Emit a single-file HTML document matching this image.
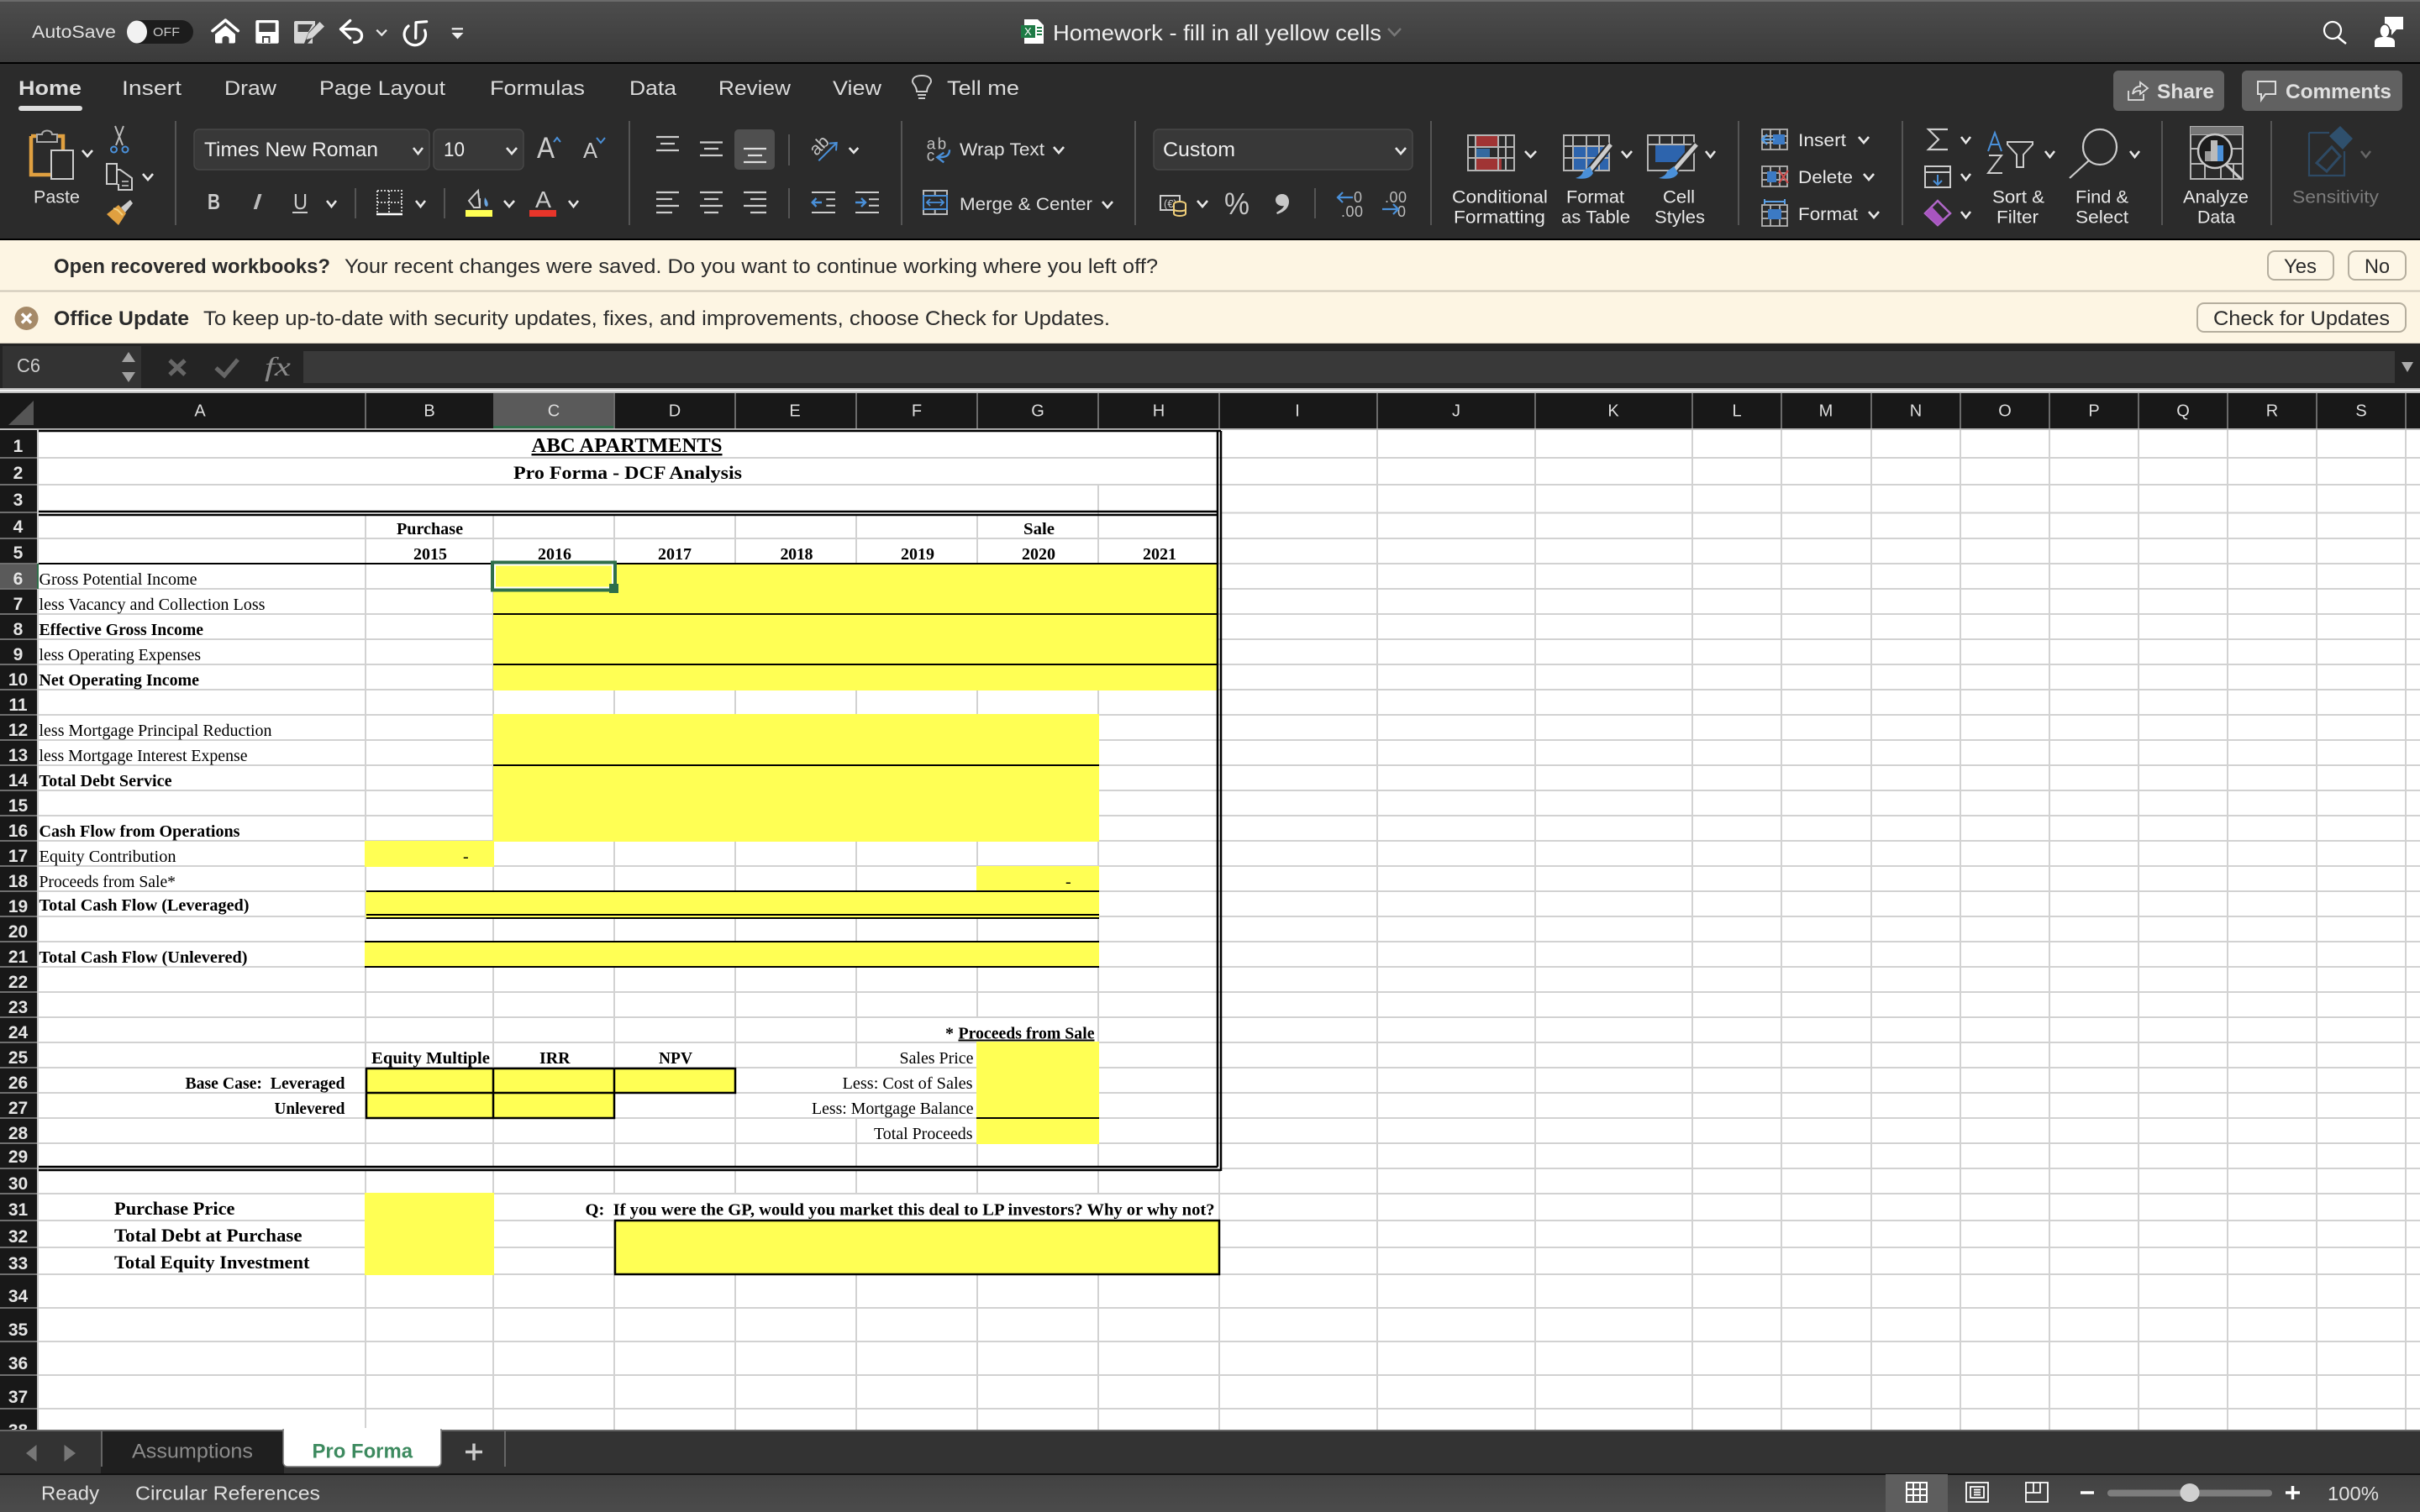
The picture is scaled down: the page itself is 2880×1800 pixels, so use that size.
<!DOCTYPE html>
<html><head><meta charset="utf-8"><title>Homework - fill in all yellow cells</title>
<style>html,body{margin:0;padding:0;background:#fff;width:2880px;height:1800px;overflow:hidden}svg{display:block}
.s{font-family:"Liberation Sans",sans-serif}.t{font-family:"Liberation Serif",serif;fill:#000;font-size:20px}.b{font-weight:bold}</style></head><body>
<svg xmlns="http://www.w3.org/2000/svg" width="2880" height="1800" viewBox="0 0 2880 1800">
<defs>
<linearGradient id="tb" x1="0" y1="0" x2="0" y2="1"><stop offset="0" stop-color="#4d4d4d"/><stop offset="1" stop-color="#3a3a3a"/></linearGradient>
<linearGradient id="st" x1="0" y1="0" x2="0" y2="1"><stop offset="0" stop-color="#424242"/><stop offset="1" stop-color="#4b4b4b"/></linearGradient>
</defs>
<!-- title bar -->
<rect width="2880" height="76" fill="url(#tb)"/><rect width="2880" height="2" fill="#6b6b6b"/><rect y="74" width="2880" height="2" fill="#000"/>
<g class="s">
<text x="38" y="45" font-size="21" fill="#e0e0e0" textLength="100" lengthAdjust="spacingAndGlyphs">AutoSave</text>
<rect x="152" y="24" width="78" height="28" rx="14" fill="#1c1c1c"/><ellipse cx="163" cy="38" rx="12" ry="13.5" fill="#f2f2f2"/>
<text x="182" y="43" font-size="15" fill="#c8c8c8" textLength="32" lengthAdjust="spacingAndGlyphs">OFF</text>
</g>
<path d="M253 36.700L268.300 24L283.300 36.700" fill="none" stroke="#fff" stroke-width="3.500" stroke-linecap="round" stroke-linejoin="round"/><path d="M256 40.700L268.300 30.500L280 40.700V49.500a2 2 0 0 1-2 2H272.500V46a4 3 0 0 0-8 0V51.500H258a2 2 0 0 1-2-2Z" fill="#fff"/>
<path d="M306.300 24H329.700a2 2 0 0 1 2 2V49.700a2 2 0 0 1-2 2H306.300a2 2 0 0 1-2-2V26a2 2 0 0 1 2-2ZM308.300 27.300V38H327.700V27.300Z" fill="#fff" fill-rule="evenodd"/><path d="M313 51V44H320.500V51" fill="none" stroke="#444" stroke-width="2"/>
<path d="M352 25H375V30L367 39L362 51.700H352a2 2 0 0 1-2-2V27a2 2 0 0 1 2-2ZM354.500 29V38H367L372 29Z" fill="#d6d6d6" fill-rule="evenodd"/><path d="M372 51.700H366L372 45Z" fill="#d6d6d6"/>
<path d="M364.500 47L367 40L380.500 26L386 31.500L372 45Z" fill="#d6d6d6"/>
<path d="M416.700 24.500L405.500 34.700L416.700 45.500M405.500 34.700H421.700C433.500 34.700 433.500 50.500 421.700 50.500" fill="none" stroke="#fff" stroke-width="3.300" stroke-linecap="round" stroke-linejoin="round"/>
<path d="M486 31A12.700 12.700 0 1 0 505.500 36M494.700 45.500L495 26.700L507.700 25.700" fill="none" stroke="#fff" stroke-width="3.200" stroke-linecap="round" stroke-linejoin="round"/>
<path d="M537.700 34.300H551" stroke="#eee" stroke-width="2.200"/><path d="M537.500 39H551.500L544.500 46.500Z" fill="#eee"/>
<path d="M1219 23H1235L1242 30V52H1219Z" fill="#fff"/><rect x="1215" y="30" width="17" height="15" fill="#1d7a45"/><path d="M1234 32h6v2h-6zM1234 36h6v2h-6zM1234 40h6v2h-6z" fill="#1d7a45"/>
<text class="s" x="1219" y="42" font-size="13" fill="#fff">X</text>
<text class="s" x="1253" y="48" font-size="26" fill="#eee" textLength="391" lengthAdjust="spacingAndGlyphs">Homework - fill in all yellow cells</text>
<path d="M1652 34L1659.500 42L1667 34" fill="none" stroke="#777" stroke-width="2.500"/>
<circle cx="2776" cy="36" r="10" fill="none" stroke="#fff" stroke-width="2.200"/><path d="M2782 44L2792 52" stroke="#fff" stroke-width="2.500"/>
<path d="M2838 20H2860V35H2852L2846 42V35H2838Z" fill="#fff"/><ellipse cx="2838" cy="37" rx="6" ry="8" fill="#fff" stroke="#3f3f3f" stroke-width="1.500"/><path d="M2826 56V50C2826 45 2832 44 2838 44S2850 45 2850 50V56Z" fill="#fff"/>
<!-- ribbon -->
<rect y="76" width="2880" height="208" fill="#2b2b2b"/><rect y="284" width="2880" height="2" fill="#000"/>
<g class="s" font-size="24" fill="#dcdcdc">
<text x="22" y="113" font-weight="bold" textLength="75" lengthAdjust="spacingAndGlyphs">Home</text>
<text x="145" y="113" textLength="71" lengthAdjust="spacingAndGlyphs">Insert</text>
<text x="267" y="113" textLength="62" lengthAdjust="spacingAndGlyphs">Draw</text>
<text x="380" y="113" textLength="150" lengthAdjust="spacingAndGlyphs">Page Layout</text>
<text x="583" y="113" textLength="113" lengthAdjust="spacingAndGlyphs">Formulas</text>
<text x="749" y="113" textLength="56" lengthAdjust="spacingAndGlyphs">Data</text>
<text x="855" y="113" textLength="86" lengthAdjust="spacingAndGlyphs">Review</text>
<text x="991" y="113" textLength="58" lengthAdjust="spacingAndGlyphs">View</text>
<text x="1127" y="113" textLength="86" lengthAdjust="spacingAndGlyphs">Tell me</text>
</g>
<rect x="22" y="126" width="76" height="6" rx="3" fill="#ddd"/>
<path d="M1091 109C1091 102 1086 100 1086 97C1086 92 1091 90 1097 90C1103 90 1108 92 1108 97C1108 100 1103 102 1103 109ZM1092 113H1102M1093 117H1101" fill="none" stroke="#ccc" stroke-width="2"/>
<rect x="2515" y="84" width="132" height="48" rx="6" fill="#616161"/><rect x="2668" y="84" width="191" height="48" rx="6" fill="#616161"/>
<g class="s" font-size="24" font-weight="bold" fill="#e0e0e0"><text x="2567" y="117" textLength="68" lengthAdjust="spacingAndGlyphs">Share</text><text x="2720" y="117" textLength="126" lengthAdjust="spacingAndGlyphs">Comments</text></g>
<path d="M2533 108V119H2551V112M2538 112C2539 105 2543 103 2547 103V98L2556 105L2547 112V108C2543 108 2540 109 2538 112Z" fill="none" stroke="#ddd" stroke-width="1.800"/>
<path d="M2687 97H2708V112H2696L2691 119V112H2687Z" fill="none" stroke="#ddd" stroke-width="2"/>
<!-- separators -->
<path d="M209 144V268M749 144V268M1073 144V268M1351 144V268M1703 144V268M2069 144V268M2264 144V268M2573 144V268M2703 144V268" stroke="#555" stroke-width="2"/>
<path d="M423 224V260M529 224V260M939 160V197M939 224V260M1565 224V260" stroke="#555" stroke-width="2"/>
<!-- paste -->
<path d="M37 162H46M66 162H75V178M37 162V208H60" fill="none" stroke="#e0a040" stroke-width="4.500"/>
<path d="M44 169V160H50C50 154 62 154 62 160H68V169Z" fill="#2b2b2b" stroke="#aaa" stroke-width="2"/>
<rect x="61" y="179" width="26" height="34" fill="#2b2b2b" stroke="#ccc" stroke-width="2"/>
<text class="s" x="40" y="241.500" font-size="21" fill="#e0e0e0" textLength="55" lengthAdjust="spacingAndGlyphs">Paste</text>
<path d="M137 150L146 173M147 150L138 173" stroke="#bbb" stroke-width="2" fill="none"/><circle cx="135.500" cy="178" r="3.500" fill="none" stroke="#4a90d9" stroke-width="2"/><circle cx="149" cy="178" r="3.500" fill="none" stroke="#4a90d9" stroke-width="2"/>
<path d="M127 195H139V219H127ZM139 202H143L157 212V226H141V219" fill="none" stroke="#ccc" stroke-width="2"/><path d="M145 216H153M145 221H153" stroke="#ccc" stroke-width="1.500"/>
<path d="M127 255L141 244L150 254L141 268Z" fill="#e0a040"/><path d="M135 248L140 250L146 256" stroke="#f2d080" stroke-width="2" fill="none"/><path d="M144 247L155 238L158 242L149 253Z" fill="#ccc"/>
<!-- font -->
<rect x="231" y="154" width="280" height="48" rx="6" fill="#383838" stroke="#474747" stroke-width="1.500"/><rect x="516" y="154" width="107" height="48" rx="6" fill="#383838" stroke="#474747" stroke-width="1.500"/>
<rect x="1373" y="154" width="308" height="48" rx="6" fill="#383838" stroke="#474747" stroke-width="1.500"/>
<g class="s" font-size="24" fill="#eee"><text x="243" y="186" textLength="207" lengthAdjust="spacingAndGlyphs">Times New Roman</text><text x="528" y="186" textLength="25" lengthAdjust="spacingAndGlyphs">10</text>
<text x="1384" y="186" textLength="86" lengthAdjust="spacingAndGlyphs">Custom</text></g>
<g class="s" fill="#ccc"><text x="639" y="188" font-size="35" textLength="21" lengthAdjust="spacingAndGlyphs">A</text><text x="694" y="188" font-size="26" textLength="17" lengthAdjust="spacingAndGlyphs">A</text></g>
<path d="M659 169L663 164L667 169M710 164L715 170L720 164" fill="none" stroke="#4a90d9" stroke-width="2"/>
<g class="s" fill="#ccc"><text x="247" y="249" font-size="26" font-weight="bold" textLength="15" lengthAdjust="spacingAndGlyphs">B</text><text x="300" y="249" font-size="26" font-style="italic" fill="#bbb" textLength="12" lengthAdjust="spacingAndGlyphs">I</text><text x="349" y="249" font-size="26" textLength="17" lengthAdjust="spacingAndGlyphs">U</text></g>
<path d="M348 253H366" stroke="#ccc" stroke-width="2"/>
<path d="M449 227H478V255M449 227V255M463 227V255M449 241H478" fill="none" stroke="#ccc" stroke-width="2" stroke-dasharray="2 2"/><path d="M448 255H479" stroke="#fff" stroke-width="2.500"/>
<path d="M558 239L569 227L571 247H564Z M571 236V248" fill="none" stroke="#ccc" stroke-width="2"/><path d="M577 235C581 240 582 245 579 246C576 245 576 240 577 235Z" fill="#6aa5e0"/>
<rect x="554" y="250" width="32" height="8" fill="#ffff54"/>
<text class="s" x="637" y="247" font-size="28" fill="#ccc" textLength="19" lengthAdjust="spacingAndGlyphs">A</text><rect x="630" y="250" width="32" height="8" fill="#e8352a"/>
<!-- alignment -->
<path d="M781 163H808M786 171H803M781 179H808M833 169.500H860M838 177H855M833 185H860" stroke="#ccc" stroke-width="2.200"/>
<rect x="874" y="154" width="48" height="48" rx="5" fill="#4f4f4f"/><path d="M885 177H912M890 185H907M885 193H912" stroke="#ddd" stroke-width="2.200"/>
<path d="M781 229H808M781 237H800M781 245H808M781 253H800M833 229H860M838 237H855M833 245H860M838 253H855M885 229H912M893 237H912M885 245H912M893 253H912" stroke="#ccc" stroke-width="2.200"/>
<path d="M966 229H994M983.300 237.300H994M983.300 244.700H994M966 253H994M1018 229H1046M1034 237.300H1046M1034 244.700H1046M1018 253H1046" stroke="#ccc" stroke-width="2"/>
<path d="M978 241H967M971.500 236L966.700 241L971.500 246M1018 241H1029.500M1025 236L1030 241L1025 246" fill="none" stroke="#4a90d9" stroke-width="2.400"/>
<text class="s" x="975" y="180" font-size="21" fill="#c4c4c4" text-anchor="middle" transform="rotate(-45 975 173.300)">ab</text><path d="M974.300 191.300L995.200 170.500M986.700 170.700L995.700 170L995 179.300" fill="none" stroke="#4a90d9" stroke-width="2"/>
<!-- wrap & merge -->
<text class="s" x="1102.700" y="177.300" font-size="19" fill="#c0c0c0" textLength="23.500" lengthAdjust="spacing">ab</text><text class="s" x="1102.700" y="191.700" font-size="19" fill="#c0c0c0">c</text>
<path d="M1130 178.300C1130 186 1125 187.300 1116 187.300M1123.300 181.700L1115.300 187.300L1123.300 193.300" fill="none" stroke="#4a90d9" stroke-width="2.400"/>
<g class="s" font-size="21" fill="#e0e0e0"><text x="1142" y="185" textLength="101" lengthAdjust="spacingAndGlyphs">Wrap Text</text><text x="1142" y="250" textLength="158" lengthAdjust="spacingAndGlyphs">Merge &amp; Center</text></g>
<path d="M1099 227H1127V255H1099ZM1112.700 227V233M1112.700 249V255" fill="none" stroke="#bbb" stroke-width="2"/><rect x="1099" y="233" width="28" height="16" fill="none" stroke="#4a90d9" stroke-width="2"/><path d="M1103 241H1123M1107 237L1103 241L1107 245M1119 237L1123 241L1119 245" fill="none" stroke="#4a90d9" stroke-width="1.800"/>
<!-- number -->
<path d="M1381 233H1404V250H1381Z" fill="none" stroke="#ccc" stroke-width="2"/><text class="s" x="1385" y="247" font-size="13" fill="#ccc">(€)</text>
<ellipse cx="1404" cy="243" rx="7" ry="3" fill="#2b2b2b" stroke="#f0cf7a" stroke-width="2"/><path d="M1397 243V254C1397 258 1411 258 1411 254V243M1397 249C1397 252 1411 252 1411 249" fill="#2b2b2b" stroke="#f0cf7a" stroke-width="2"/>
<text class="s" x="1457" y="255" font-size="36" fill="#c8c8c8" textLength="30" lengthAdjust="spacingAndGlyphs">%</text>
<path d="M1526 231C1531 231 1534 235 1534 240C1534 247 1529 252 1520 255L1519 253C1524 250 1527 248 1528 245C1523 246 1518 243 1518 238C1518 234 1522 231 1526 231Z" fill="#c8c8c8"/>
<g class="s" font-size="18" fill="#bbb"><text x="1611" y="241">0</text><text x="1596" y="258" textLength="26">.00</text><text x="1648" y="241" textLength="26">.00</text><text x="1663" y="258">0</text></g>
<path d="M1610 235H1592M1598 229L1592 235L1598 241M1645 249H1664M1658 243L1664 249L1658 255" fill="none" stroke="#4a90d9" stroke-width="2.200"/>
<!-- CF -->
<rect x="1756" y="160" width="26" height="15" fill="#a03434"/><rect x="1756" y="177" width="17" height="11" fill="#34699f"/><rect x="1756" y="188" width="31" height="15" fill="#a03434"/>
<path d="M1747 161H1802V203H1747ZM1756 161V203M1783 161V203M1792 161V203M1747 175H1802M1747 188H1802" fill="none" stroke="#b4b4b4" stroke-width="2"/>
<rect x="1872" y="174" width="43" height="29" fill="#2d64ad"/><path d="M1861 161H1915V203H1861ZM1872 161V203M1888 161V203M1903 161V203M1861 174H1915M1861 188H1915" fill="none" stroke="#b4b4b4" stroke-width="2"/>
<path d="M1917 172L1892 203" stroke="#2b2b2b" stroke-width="9"/><path d="M1917 172L1892 203" stroke="#ccc" stroke-width="5"/><path d="M1884 204L1892 198L1896 206C1893 212 1886 214 1875 212C1881 210 1883 208 1884 204Z" fill="#4a90d9"/>
<rect x="1970" y="172" width="35" height="21" fill="#2d64ad"/><path d="M1961 161H2016V203H1961ZM1961 172H2016M1975 161V172M1990 161V172M2004 161V172" fill="none" stroke="#b4b4b4" stroke-width="2"/>
<path d="M2019 172L1992 203" stroke="#2b2b2b" stroke-width="9"/><path d="M2019 172L1992 203" stroke="#ccc" stroke-width="5"/><path d="M1984 204L1992 198L1997 206C1994 212 1987 214 1974 212C1980 210 1983 208 1984 204Z" fill="#4a90d9"/>
<g class="s" font-size="21" fill="#e8e8e8">
<text x="1728" y="241.500" textLength="114" lengthAdjust="spacingAndGlyphs">Conditional</text><text x="1730" y="265.500" textLength="109" lengthAdjust="spacingAndGlyphs">Formatting</text>
<text x="1864" y="241.500" textLength="69" lengthAdjust="spacingAndGlyphs">Format</text><text x="1858" y="265.500" textLength="82" lengthAdjust="spacingAndGlyphs">as Table</text>
<text x="1979" y="241.500" textLength="38" lengthAdjust="spacingAndGlyphs">Cell</text><text x="1969" y="265.500" textLength="60" lengthAdjust="spacingAndGlyphs">Styles</text>
<text x="2140" y="174" textLength="57" lengthAdjust="spacingAndGlyphs">Insert</text><text x="2140" y="218" textLength="65" lengthAdjust="spacingAndGlyphs">Delete</text><text x="2140" y="262" textLength="71" lengthAdjust="spacingAndGlyphs">Format</text>
<text x="2371" y="241.500" textLength="62" lengthAdjust="spacingAndGlyphs">Sort &amp;</text><text x="2376" y="265.500" textLength="50" lengthAdjust="spacingAndGlyphs">Filter</text>
<text x="2470" y="241.500" textLength="63" lengthAdjust="spacingAndGlyphs">Find &amp;</text><text x="2470" y="265.500" textLength="63" lengthAdjust="spacingAndGlyphs">Select</text>
<text x="2598" y="241.500" textLength="78" lengthAdjust="spacingAndGlyphs">Analyze</text><text x="2615" y="265.500" textLength="45" lengthAdjust="spacingAndGlyphs">Data</text>
<text x="2728" y="241.500" fill="#7c7c7c" textLength="103" lengthAdjust="spacingAndGlyphs">Sensitivity</text>
</g>
<!-- cells group icons -->
<path d="M2097 154H2127V178H2097ZM2107 154V178M2118 154V178M2097 162H2127M2097 170H2127" fill="none" stroke="#b4b4b4" stroke-width="1.800"/><rect x="2110" y="160" width="14" height="12" fill="#3c7ac4"/><path d="M2112 166H2098M2103 160L2097 166L2103 172" fill="none" stroke="#5aa0e6" stroke-width="2.200"/>
<path d="M2097 198H2127V222H2097ZM2107 198V222M2118 198V222M2097 206H2127M2097 214H2127" fill="none" stroke="#b4b4b4" stroke-width="1.800"/><rect x="2103" y="204" width="11" height="13" fill="#3c7ac4"/><path d="M2117 203L2128 218M2128 203L2117 218" stroke="#d05050" stroke-width="2.200"/>
<path d="M2097 244H2127V269H2097ZM2107 244V269M2118 244V269M2097 252H2127M2097 260H2127" fill="none" stroke="#b4b4b4" stroke-width="1.800"/><rect x="2104" y="249" width="16" height="12" fill="#3c7ac4"/><path d="M2100 240H2124M2100 237V243M2124 237V243" stroke="#5aa0e6" stroke-width="2" fill="none"/>
<path d="M2318 154H2295L2307 166L2295 178H2318" fill="none" stroke="#ccc" stroke-width="2.200"/>
<path d="M2291 198H2321V223H2291ZM2291 205H2321" fill="none" stroke="#ccc" stroke-width="2"/><path d="M2306 208V220M2301 215L2306 220L2311 215" fill="none" stroke="#4a90d9" stroke-width="2"/>
<path d="M2306 239L2321 254L2306 268L2291 254Z" fill="none" stroke="#b067c8" stroke-width="2.500"/><path d="M2291 254L2299 246L2313 261L2306 268Z" fill="#a855c0"/>
<path d="M2366 180L2374 158L2382 180M2369 172H2379" fill="none" stroke="#4a90d9" stroke-width="2"/><path d="M2367 185H2382L2366 206H2383" fill="none" stroke="#ccc" stroke-width="2"/>
<path d="M2389 169H2419V172L2408 184V199H2400V184L2389 172Z" fill="none" stroke="#ccc" stroke-width="2"/>
<ellipse cx="2499" cy="175" rx="20" ry="21" fill="none" stroke="#ccc" stroke-width="2.200"/><path d="M2486 191L2463 212" stroke="#ccc" stroke-width="2.200"/>
<!-- analyze -->
<path d="M2607 151H2669V213H2607ZM2607 160H2669M2607 177H2669M2607 195H2669M2624 195V213M2643 195V213M2658 195V213" fill="none" stroke="#b4b4b4" stroke-width="2"/><rect x="2607" y="151" width="62" height="9" fill="#777"/>
<circle cx="2636" cy="180" r="20" fill="#1c1c1c" stroke="#c8c8c8" stroke-width="2.500"/><rect x="2624" y="180" width="8" height="12" fill="#999"/><rect x="2631" y="167" width="8" height="25" fill="#bbb"/><rect x="2639" y="173" width="7" height="19" fill="#4a90d9"/><path d="M2649 196L2668 214" stroke="#ccc" stroke-width="3"/>
<!-- sensitivity -->
<path d="M2748 158H2772M2748 158V209H2790V180" fill="none" stroke="#2e4a64" stroke-width="2.200"/><path d="M2772 162L2785 150L2800 165L2788 178Z" fill="#2f506d"/><path d="M2757 194L2775 175L2785 186L2769 204Z" fill="none" stroke="#2e4a64" stroke-width="3"/>
<!-- chevrons -->
<path d="M98 179l6 7l6-7M170 207l6 7l6-7M492 176l5.500 7l5.500-7M603 176l6 7l6-7M389 239l5.500 7l5.500-7M495 239l5.500 7l5.500-7M600 239l6 7l6-7M677 239l5.500 7l5.500-7M1010.700 176l5.300 5.700l5.300-5.700M1254 175l6 7l6-7M1312 240l6 7l6-7M1661 176l6 7l6-7M1425 239l6 7l6-7M1815 180l6.500 7l6.500-7M1930 180l6 7l6-7M2030 180l5.500 7l5.500-7M2212 163l6 7l6-7M2218 207l6 7l6-7M2224 252l6 7l6-7M2334 163l5.500 7l5.500-7M2334 207l5.500 7l5.500-7M2334 252l5.500 7l5.500-7M2434 180l5.500 7l5.500-7M2535 180l5.500 7l5.500-7" fill="none" stroke="#e8e8e8" stroke-width="2.600"/>
<path d="M448.300 35.700l6 6l5.700-6" fill="none" stroke="#e8e8e8" stroke-width="2.300"/>
<path d="M2810 180l5.500 7l5.500-7" fill="none" stroke="#666" stroke-width="2.500"/>
<!-- message bars -->
<rect y="286" width="2880" height="123" fill="#fdf5e3"/><rect y="345.500" width="2880" height="2" fill="#cfc8b8"/><rect y="408" width="2880" height="1.500" fill="#cfc8b8"/>
<g class="s" font-size="24" fill="#2b2b2b">
<text x="64" y="325" font-weight="bold" textLength="329" lengthAdjust="spacingAndGlyphs">Open recovered workbooks?</text>
<text x="410" y="325" textLength="968" lengthAdjust="spacingAndGlyphs">Your recent changes were saved. Do you want to continue working where you left off?</text>
<text x="64" y="387" font-weight="bold" textLength="161" lengthAdjust="spacingAndGlyphs">Office Update</text>
<text x="242" y="387" textLength="1079" lengthAdjust="spacingAndGlyphs">To keep up-to-date with security updates, fixes, and improvements, choose Check for Updates.</text>
</g>
<circle cx="31.500" cy="379" r="14" fill="#a68a68"/><path d="M26 373.500L37 384.500M37 373.500L26 384.500" stroke="#fff" stroke-width="3.500"/>
<g fill="#fdf6e6" stroke="#b5ae9e" stroke-width="2"><rect x="2699" y="299" width="78" height="34" rx="8"/><rect x="2795" y="299" width="68" height="34" rx="8"/><rect x="2615" y="361" width="248" height="34" rx="8"/></g>
<g class="s" font-size="24" fill="#2b2b2b"><text x="2718" y="325" textLength="39" lengthAdjust="spacingAndGlyphs">Yes</text><text x="2814" y="325" textLength="30" lengthAdjust="spacingAndGlyphs">No</text><text x="2634" y="387" textLength="210" lengthAdjust="spacingAndGlyphs">Check for Updates</text></g>
<!-- formula bar -->
<rect y="409" width="2880" height="53" fill="#242424"/><rect x="3" y="412" width="165" height="50" fill="#333"/>
<text class="s" x="20" y="443" font-size="23" fill="#ccc" textLength="28" lengthAdjust="spacingAndGlyphs">C6</text>
<path d="M153 419L161 431H145ZM153 455L145 443H161Z" fill="#a0a0a0"/>
<path d="M202 429L220 446M220 429L202 446" stroke="#666" stroke-width="5"/><path d="M257 438L267 447L283 428" fill="none" stroke="#666" stroke-width="5"/>
<text x="315" y="447" font-family="Liberation Serif,serif" font-style="italic" font-size="32" fill="#8a8a8a" textLength="31" lengthAdjust="spacingAndGlyphs">fx</text>
<rect x="361" y="418" width="2489" height="38" fill="#393939"/><path d="M2858 431H2872L2865 443Z" fill="#aaa"/>
<rect y="462" width="2880" height="6" fill="#bdbdbd"/><rect y="464" width="2880" height="2" fill="#f0f0f0"/>
<!-- sheet -->
<rect y="468" width="2880" height="44" fill="#181818"/><rect x="587" y="468" width="144" height="42" fill="#5a5a5a"/><rect x="587" y="507" width="144" height="3" fill="#2f6f4a"/>
<rect y="510" width="2880" height="2" fill="#bdbdbd"/>
<path d="M40 477V506H10Z" fill="#555"/>
<path d="M435 468V510M731 468V510M875 468V510M1019 468V510M1163 468V510M1307 468V510M1451 468V510M1639 468V510M1827 468V510M2014 468V510M2120 468V510M2227 468V510M2333 468V510M2439 468V510M2545 468V510M2651 468V510M2757 468V510M2863 468V510" stroke="#6a6a6a" stroke-width="2"/>
<g class="s" font-size="20" fill="#dedede" text-anchor="middle">
<text x="238" y="495.500">A</text><text x="511" y="495.500">B</text><text x="659" y="495.500">C</text><text x="803" y="495.500">D</text><text x="946" y="495.500">E</text><text x="1091" y="495.500">F</text><text x="1235" y="495.500">G</text><text x="1379" y="495.500">H</text><text x="1544" y="495.500">I</text><text x="1733" y="495.500">J</text><text x="1920" y="495.500">K</text><text x="2067" y="495.500">L</text><text x="2173" y="495.500">M</text><text x="2280" y="495.500">N</text><text x="2386" y="495.500">O</text><text x="2492" y="495.500">P</text><text x="2598" y="495.500">Q</text><text x="2704" y="495.500">R</text><text x="2810" y="495.500">S</text>
</g>
<rect y="512" width="44" height="1190" fill="#181818"/><rect y="670" width="44" height="31" fill="#5a5a5a"/><rect x="44" y="512" width="2" height="1190" fill="#c8c8c8"/><rect x="44" y="671" width="2" height="30" fill="#2f6f4a"/>
<path d="M0 545H44M0 577H44M0 610H44M0 641H44M0 671H44M0 701H44M0 731H44M0 761H44M0 791H44M0 821H44M0 851H44M0 881H44M0 911H44M0 941H44M0 971H44M0 1001H44M0 1031H44M0 1061H44M0 1091H44M0 1121H44M0 1151H44M0 1181H44M0 1211H44M0 1241H44M0 1271H44M0 1301H44M0 1331H44M0 1361H44M0 1391H44M0 1421H44M0 1453H44M0 1485H44M0 1517H44M0 1557H44M0 1597H44M0 1637H44M0 1677H44" stroke="#6e6e6e" stroke-width="2"/>
<g class="s" font-size="21" fill="#e6e6e6" text-anchor="middle" font-weight="bold">
<text x="21.500" y="538">1</text><text x="21.500" y="570">2</text><text x="21.500" y="602">3</text><text x="21.500" y="634">4</text><text x="21.500" y="665">5</text><text x="21.500" y="696">6</text><text x="21.500" y="726">7</text><text x="21.500" y="756">8</text><text x="21.500" y="786">9</text><text x="21.500" y="816">10</text><text x="21.500" y="846">11</text><text x="21.500" y="876">12</text><text x="21.500" y="906">13</text><text x="21.500" y="936">14</text><text x="21.500" y="966">15</text><text x="21.500" y="996">16</text><text x="21.500" y="1026">17</text><text x="21.500" y="1056">18</text><text x="21.500" y="1086">19</text><text x="21.500" y="1116">20</text><text x="21.500" y="1146">21</text><text x="21.500" y="1176">22</text><text x="21.500" y="1206">23</text><text x="21.500" y="1236">24</text><text x="21.500" y="1266">25</text><text x="21.500" y="1296">26</text><text x="21.500" y="1326">27</text><text x="21.500" y="1356">28</text><text x="21.500" y="1384">29</text><text x="21.500" y="1416">30</text><text x="21.500" y="1447">31</text><text x="21.500" y="1479">32</text><text x="21.500" y="1511">33</text><text x="21.500" y="1550">34</text><text x="21.500" y="1590">35</text><text x="21.500" y="1630">36</text><text x="21.500" y="1670">37</text><text x="21.500" y="1710">38</text>
</g>
<rect x="46" y="512" width="2834" height="1190" fill="#fff"/>
<!-- grid -->
<path d="M46 545H2880M46 577H2880M1454 610.500H2880M46 641H2880M46 671H2880M46 701H2880M46 731H2880M46 761H2880M46 791H2880M46 821H2880M46 851H2880M46 881H2880M46 911H2880M46 941H2880M46 971H2880M46 1001H2880M46 1031H2880M46 1061H2880M46 1091H2880M46 1121H2880M46 1151H2880M46 1181H2880M46 1211H2880M46 1241H2880M46 1271H2880M46 1301H2880M46 1331H2880M46 1361H2880M46 1391H2880M46 1421H2880M46 1453H2880M46 1485H2880M46 1517H2880M46 1557H2880M46 1597H2880M46 1637H2880M46 1677H2880" stroke="#d2d2d2" stroke-width="2"/>
<path d="M435 612V1702M587 612V1702M731 612V1421M731 1453V1702M875 612V1421M875 1453V1702M1019 612V1271M1019 1331V1421M1019 1453V1702M1163 612V1211M1163 1241V1421M1163 1453V1702M1307 577V1421M1307 1453V1702M1451 1394V1702M1639 512V1702M1827 512V1702M2014 512V1702M2120 512V1702M2227 512V1702M2333 512V1702M2439 512V1702M2545 512V1702M2651 512V1702M2757 512V1702M2863 512V1702" stroke="#d2d2d2" stroke-width="2"/>
<!-- yellow -->
<g fill="#ffff54">
<rect x="587" y="670" width="861" height="152"/><rect x="587" y="850" width="721" height="152"/><rect x="434" y="1001" width="154" height="31"/><rect x="1162" y="1031" width="146" height="31"/><rect x="435" y="1061" width="873" height="31"/><rect x="434" y="1121" width="874" height="31"/><rect x="435" y="1271" width="440" height="30"/><rect x="435" y="1301" width="296" height="30"/><rect x="1162" y="1240" width="146" height="122"/><rect x="434" y="1420" width="154" height="98"/><rect x="731" y="1452" width="720" height="66"/>
</g>
<!-- black borders -->
<g fill="none" stroke="#000">
<path d="M46 513H1453M46 609H1449M46 613H1449M46 1389H1449M46 1393H1453M1449 513V1389M1453 513V1394" stroke-width="2.500"/>
<path d="M46 671H1448M587 731H1448M587 791H1448M587 911H1308M436 1061H1308M436 1089H1308M436 1093H1308M434 1121H1308M434 1151H1308M1162 1331H1308" stroke-width="2"/>
<path d="M436 1272H875V1301H436ZM436 1272V1331H731V1272M587 1272V1331M436 1301H731" stroke-width="2.500"/>
<rect x="732" y="1453" width="719" height="64" stroke-width="2.500"/>
</g>
<!-- sheet text -->
<g class="t b">
<text x="632.500" y="538" font-size="24" text-decoration="underline" textLength="227" lengthAdjust="spacingAndGlyphs">ABC APARTMENTS</text>
<text x="611" y="570" font-size="22" textLength="272" lengthAdjust="spacingAndGlyphs">Pro Forma - DCF Analysis</text>
<text x="472" y="636" textLength="79" lengthAdjust="spacingAndGlyphs">Purchase</text><text x="1218" y="636" textLength="37" lengthAdjust="spacingAndGlyphs">Sale</text>
<text x="492" y="666" textLength="40">2015</text><text x="640" y="666" textLength="40">2016</text><text x="783" y="666" textLength="40">2017</text><text x="928.500" y="666" textLength="39">2018</text><text x="1072" y="666" textLength="40">2019</text><text x="1216" y="666" textLength="40">2020</text><text x="1360" y="666" textLength="40">2021</text>
<text x="46.500" y="756" textLength="195.500" lengthAdjust="spacingAndGlyphs">Effective Gross Income</text>
<text x="46.500" y="816" textLength="190.500" lengthAdjust="spacingAndGlyphs">Net Operating Income</text>
<text x="46.500" y="936" textLength="158" lengthAdjust="spacingAndGlyphs">Total Debt Service</text>
<text x="46.500" y="996" textLength="239" lengthAdjust="spacingAndGlyphs">Cash Flow from Operations</text>
<text x="46.500" y="1084" textLength="250" lengthAdjust="spacingAndGlyphs">Total Cash Flow (Leveraged)</text>
<text x="46.500" y="1146" textLength="248" lengthAdjust="spacingAndGlyphs">Total Cash Flow (Unlevered)</text>
<text x="442" y="1266" textLength="141" lengthAdjust="spacingAndGlyphs">Equity Multiple</text><text x="642" y="1266" textLength="36.500" lengthAdjust="spacingAndGlyphs">IRR</text><text x="784" y="1266" textLength="40" lengthAdjust="spacingAndGlyphs">NPV</text>
<text x="220.500" y="1296" textLength="190" xml:space="preserve" lengthAdjust="spacingAndGlyphs">Base Case:  Leveraged</text><text x="326.500" y="1326" textLength="84" lengthAdjust="spacingAndGlyphs">Unlevered</text>
<text x="1125" y="1236.500">*</text><text x="1140.500" y="1236.500" text-decoration="underline" textLength="162" lengthAdjust="spacingAndGlyphs">Proceeds from Sale</text>
<text x="136" y="1446" font-size="22" textLength="143.500" lengthAdjust="spacingAndGlyphs">Purchase Price</text>
<text x="136" y="1478" font-size="22" textLength="223.500" lengthAdjust="spacingAndGlyphs">Total Debt at Purchase</text>
<text x="136" y="1510" font-size="22" textLength="232.500" lengthAdjust="spacingAndGlyphs">Total Equity Investment</text>
<text x="696.500" y="1446.500" textLength="749" xml:space="preserve" lengthAdjust="spacingAndGlyphs">Q:  If you were the GP, would you market this deal to LP investors? Why or why not?</text>
</g>
<g class="t">
<text x="46.500" y="696" textLength="188" lengthAdjust="spacingAndGlyphs">Gross Potential Income</text>
<text x="46.500" y="726" textLength="269" lengthAdjust="spacingAndGlyphs">less Vacancy and Collection Loss</text>
<text x="46.500" y="786" textLength="192.500" lengthAdjust="spacingAndGlyphs">less Operating Expenses</text>
<text x="46.500" y="876" textLength="277" lengthAdjust="spacingAndGlyphs">less Mortgage Principal Reduction</text>
<text x="46.500" y="906" textLength="248" lengthAdjust="spacingAndGlyphs">less Mortgage Interest Expense</text>
<text x="46.500" y="1026" textLength="163" lengthAdjust="spacingAndGlyphs">Equity Contribution</text>
<text x="46.500" y="1056" textLength="162.500" lengthAdjust="spacingAndGlyphs">Proceeds from Sale*</text>
<text x="551" y="1026">-</text><text x="1268" y="1056">-</text>
<text x="1070.500" y="1266" textLength="88" lengthAdjust="spacingAndGlyphs">Sales Price</text>
<text x="1002.500" y="1296" textLength="155" lengthAdjust="spacingAndGlyphs">Less: Cost of Sales</text>
<text x="966" y="1326" textLength="192.500" lengthAdjust="spacingAndGlyphs">Less: Mortgage Balance</text>
<text x="1040" y="1356" textLength="117.500" lengthAdjust="spacingAndGlyphs">Total Proceeds</text>
</g>
<!-- selection -->
<rect x="586" y="669.500" width="146" height="33" fill="none" stroke="#2f6f4a" stroke-width="4"/><rect x="589" y="672.500" width="140" height="27" fill="none" stroke="#fff" stroke-width="2"/>
<rect x="725" y="695" width="11" height="11" fill="#2f6f4a"/>
<!-- tab bar -->
<rect y="1702" width="2880" height="53" fill="#333"/><rect y="1702" width="2880" height="2" fill="#666"/>
<rect x="120" y="1704" width="218" height="50" fill="#1f1f1f"/><path d="M121 1704V1746M601 1704V1746" stroke="#666" stroke-width="2"/>
<path d="M337 1702H525V1741a5 5 0 0 1-5 5H342a5 5 0 0 1-5-5Z" fill="#fff" stroke="#777" stroke-width="1.500"/><rect x="338" y="1700" width="186" height="4" fill="#fff"/>
<path d="M43.500 1720V1740L31 1730ZM76.500 1720V1740L90 1730Z" fill="#777"/>
<text class="s" x="157" y="1735.500" font-size="24" fill="#8c8c8c" textLength="144" lengthAdjust="spacingAndGlyphs">Assumptions</text>
<text class="s" x="371.500" y="1735.500" font-size="24" font-weight="bold" fill="#3d8a5f" textLength="119.500" lengthAdjust="spacingAndGlyphs">Pro Forma</text>
<path d="M554 1728.500H574M564 1718.500V1738.500" stroke="#ccc" stroke-width="3.500"/>
<!-- status bar -->
<rect y="1754" width="2880" height="2" fill="#111"/><rect y="1756" width="2880" height="44" fill="url(#st)"/>
<g class="s" font-size="23" fill="#e0e0e0"><text x="49" y="1785.500" textLength="69" lengthAdjust="spacingAndGlyphs">Ready</text><text x="161" y="1785.500" textLength="220" lengthAdjust="spacingAndGlyphs">Circular References</text><text x="2770" y="1786" textLength="61" lengthAdjust="spacingAndGlyphs">100%</text></g>
<rect x="2244" y="1755" width="74" height="45" fill="#5e5e5e"/>
<path d="M2269 1765H2293V1788H2269ZM2277 1765V1788M2285 1765V1788M2269 1773H2293M2269 1780H2293" fill="none" stroke="#fff" stroke-width="2"/>
<path d="M2340 1765H2366V1788H2340ZM2345 1770H2361V1783H2345ZM2349 1773.500H2357M2349 1776.500H2357M2349 1779.500H2357" fill="none" stroke="#fff" stroke-width="1.800"/>
<path d="M2411 1765H2437V1788H2411ZM2411 1777H2428V1765M2420 1765V1777" fill="none" stroke="#fff" stroke-width="1.800"/>
<path d="M2476 1777H2492M2720 1777H2737M2728.500 1769V1785" stroke="#fff" stroke-width="3.500"/>
<rect x="2508" y="1773.500" width="196" height="8" rx="4" fill="#7d7d7d"/><ellipse cx="2606" cy="1777" rx="11.500" ry="11" fill="#d0d0d0"/>
</svg>
</body></html>
